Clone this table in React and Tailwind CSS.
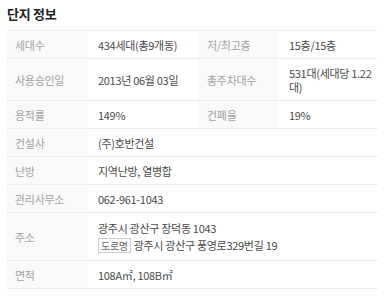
const rows = [
  [['세대수', '434세대(총9개동)'], ['저/최고층', '15층/15층']],
  [['사용승인일', '2013년 06월 03일'], ['총주차대수', '531대(세대당 1.22 대)']],
  [['용적률', '149%'], ['건폐율', '19%']],
  [['건설사', '(주)호반건설']],
  [['난방', '지역난방, 열병합']],
  [['관리사무소', '062-961-1043']],
];

const th = 'bg-[#f9f9f9] text-[#a3a3a3] font-normal text-left align-middle pl-2 pr-2 pt-[7px] pb-[6px]';
const td = 'text-[#4a4a4a] align-middle pl-2.5 pr-1.5 pt-[7px] pb-[6px]';

export default function App() {
  return (
    <div className="w-[384px] h-[300px] bg-white px-[7px] pt-[5px] overflow-hidden font-['Noto_Sans_CJK_KR',sans-serif]">
      <h2 className="text-[13px] font-bold text-[#222] leading-[18px] mb-[7px] tracking-[-0.3px]">단지 정보</h2>
      <table className="w-[371px] table-fixed border-collapse text-[11px] leading-[14px] tracking-[-0.3px]">
        <colgroup>
          <col className="w-[81px]" />
          <col className="w-[111px]" />
          <col className="w-[80px]" />
          <col className="w-[99px]" />
        </colgroup>
        <tbody>
          {rows.map((r, i) => (
            <tr key={i} className="border-t border-b border-[#eee]">
              <th className={th}>{r[0][0]}</th>
              <td className={td} colSpan={r.length === 1 ? 3 : 1}>{r[0][1]}</td>
              {r[1] && (
                <>
                  <th className={th}>{r[1][0]}</th>
                  <td className={td}>{r[1][1]}</td>
                </>
              )}
            </tr>
          ))}
          <tr className="border-b border-[#eee]">
            <th className={th}>주소</th>
            <td className={td + ' leading-[17px]'} colSpan={3}>
              <div>광주시 광산구 장덕동 1043</div>
              <div className="flex items-center gap-[3px]">
                <span className="border border-[#ccc] text-[#666] text-[10px] leading-[13px] px-[2px]">도로명</span>
                <span>광주시 광산구 풍영로329번길 19</span>
              </div>
            </td>
          </tr>
          <tr className="border-b border-[#eee]">
            <th className={th}>면적</th>
            <td className={td} colSpan={3}>108A㎡, 108B㎡</td>
          </tr>
        </tbody>
      </table>
    </div>
  );
}
